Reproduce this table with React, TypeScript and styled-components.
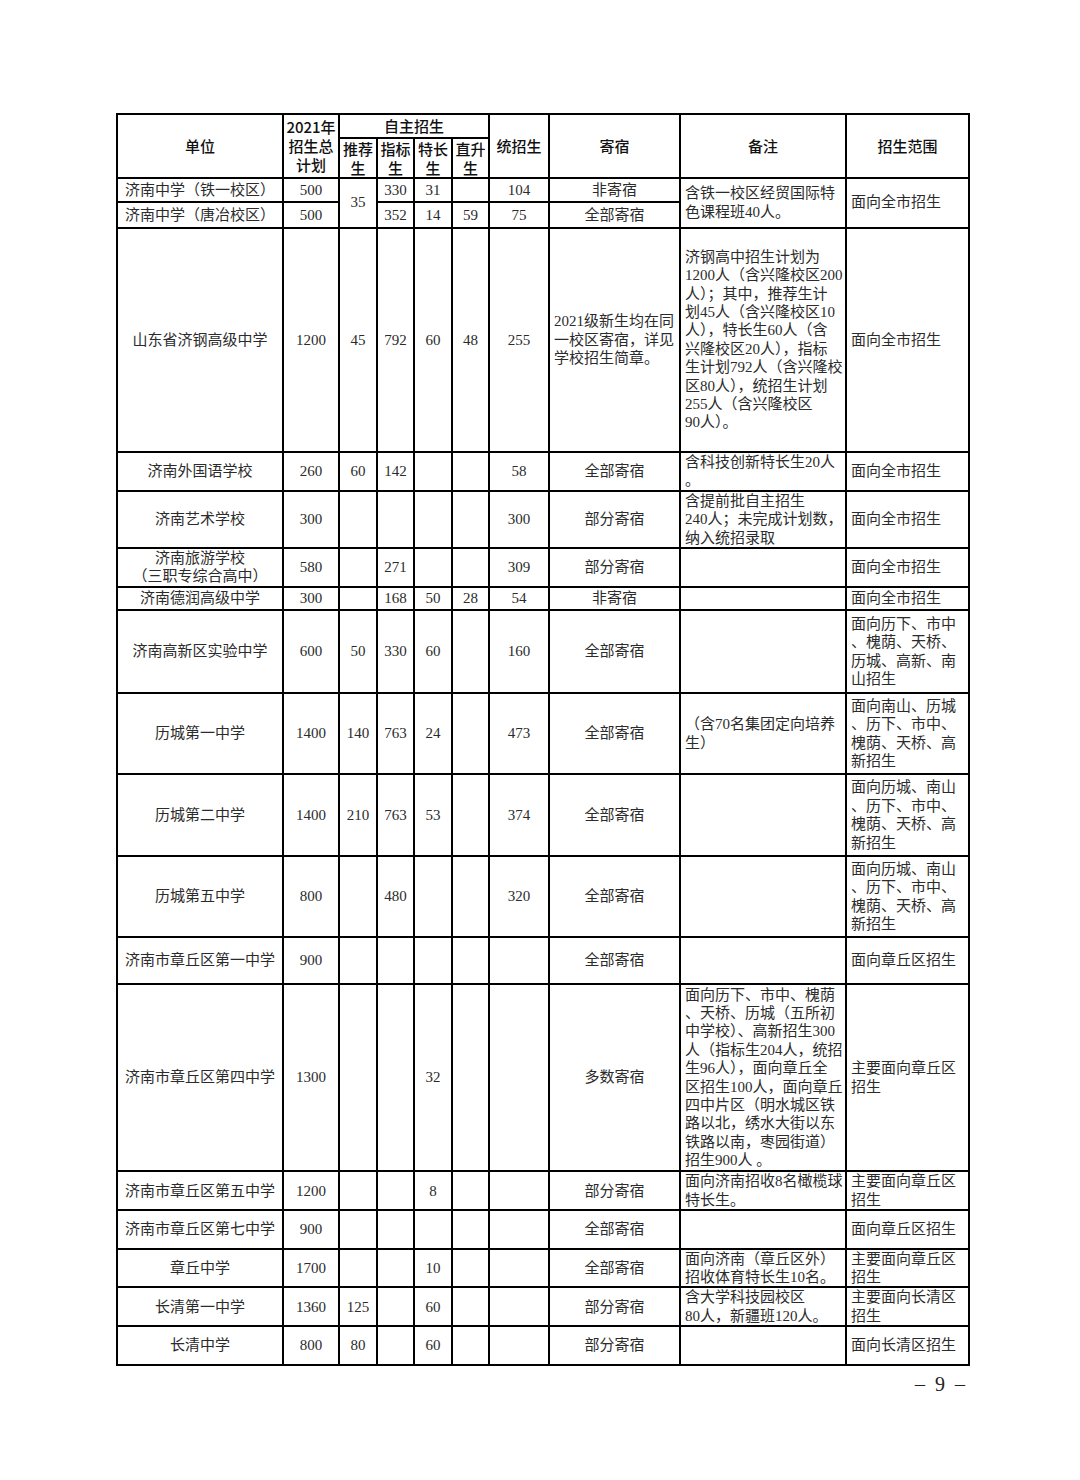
import React from 'react';
import styled, { createGlobalStyle } from 'styled-components';

const GlobalStyle = createGlobalStyle`
  body {
    margin: 0;
    background: #fff;
  }
`;

const Page = styled.div`
  width: 1080px;
  min-height: 1480px;
  box-sizing: border-box;
  padding: 113px 0 0 116px;
  background: #fff;
`;

const Table = styled.table`
  width: 852px;
  table-layout: fixed;
  border-collapse: collapse;
  border: 2px solid #000;
  font-family: "Liberation Serif", "Noto Sans CJK SC", serif;
  font-size: 15px;
  line-height: 18.4px;
  color: #2b2b2b;
`;

// row heights are measured between rule lines in the scan
const Row = styled.tr<{ $h: number }>`
  height: ${(p) => p.$h - 0.5}px;
`;

const Head = styled.th`
  border: 2px solid #000;
  padding: 0;
  font-family: "Noto Sans CJK SC", sans-serif;
  font-weight: 500;
  font-size: 15px;
  line-height: 19px;
  color: #111;
  text-align: center;
  vertical-align: middle;
`;

const Cell = styled.td<{ $left?: boolean }>`
  border: 2px solid #000;
  padding: 0 2px 0 ${(p) => (p.$left ? 4 : 2)}px;
  text-align: ${(p) => (p.$left ? 'left' : 'center')};
  vertical-align: middle;
  white-space: nowrap;
  overflow: hidden;
`;

const PageNo = styled.div`
  width: 852px;
  margin-top: 8px;
  padding-right: 3px;
  box-sizing: border-box;
  text-align: right;
  font-family: "Liberation Serif", serif;
  font-size: 20px;
  line-height: 20px;
  word-spacing: 5px;
  color: #222;
`;

const colWidths = [166, 56, 38, 37, 38, 37, 60, 131, 166, 123];

const Lines: React.FC<{ lines: string[] }> = ({ lines }) => (
  <>
    {lines.map((l, i) => (
      <React.Fragment key={i}>
        {i > 0 && <br />}
        {l}
      </React.Fragment>
    ))}
  </>
);

type School = {
  name: string[];
  total: string;
  tj: string;
  zb: string;
  tc: string;
  zs: string;
  tz: string;
  js: string[];
  jsLeft?: boolean;
  bz: string[];
  fw: string[];
  h: number;
};

const FOUR_AREAS_A = ['面向历城、南山', '、历下、市中、', '槐荫、天桥、高', '新招生'];

const schools: School[] = [
  {
    name: ['山东省济钢高级中学'], total: '1200', tj: '45', zb: '792', tc: '60', zs: '48', tz: '255',
    js: ['2021级新生均在同', '一校区寄宿，详见', '学校招生简章。'], jsLeft: true,
    bz: [
      '济钢高中招生计划为',
      '1200人（含兴隆校区200',
      '人）；其中，推荐生计',
      '划45人（含兴隆校区10',
      '人），特长生60人（含',
      '兴隆校区20人），指标',
      '生计划792人（含兴隆校',
      '区80人），统招生计划',
      '255人（含兴隆校区',
      '90人）。',
    ],
    fw: ['面向全市招生'], h: 225,
  },
  {
    name: ['济南外国语学校'], total: '260', tj: '60', zb: '142', tc: '', zs: '', tz: '58',
    js: ['全部寄宿'], bz: ['含科技创新特长生20人', '。'], fw: ['面向全市招生'], h: 37,
  },
  {
    name: ['济南艺术学校'], total: '300', tj: '', zb: '', tc: '', zs: '', tz: '300',
    js: ['部分寄宿'], bz: ['含提前批自主招生', '240人；未完成计划数，', '纳入统招录取'], fw: ['面向全市招生'], h: 56,
  },
  {
    name: ['济南旅游学校', '（三职专综合高中）'], total: '580', tj: '', zb: '271', tc: '', zs: '', tz: '309',
    js: ['部分寄宿'], bz: [], fw: ['面向全市招生'], h: 38,
  },
  {
    name: ['济南德润高级中学'], total: '300', tj: '', zb: '168', tc: '50', zs: '28', tz: '54',
    js: ['非寄宿'], bz: [], fw: ['面向全市招生'], h: 24,
  },
  {
    name: ['济南高新区实验中学'], total: '600', tj: '50', zb: '330', tc: '60', zs: '', tz: '160',
    js: ['全部寄宿'], bz: [], fw: ['面向历下、市中', '、槐荫、天桥、', '历城、高新、南', '山招生'], h: 83,
  },
  {
    name: ['历城第一中学'], total: '1400', tj: '140', zb: '763', tc: '24', zs: '', tz: '473',
    js: ['全部寄宿'], bz: ['（含70名集团定向培养', '生）'],
    fw: ['面向南山、历城', '、历下、市中、', '槐荫、天桥、高', '新招生'], h: 82,
  },
  {
    name: ['历城第二中学'], total: '1400', tj: '210', zb: '763', tc: '53', zs: '', tz: '374',
    js: ['全部寄宿'], bz: [], fw: FOUR_AREAS_A, h: 82,
  },
  {
    name: ['历城第五中学'], total: '800', tj: '', zb: '480', tc: '', zs: '', tz: '320',
    js: ['全部寄宿'], bz: [], fw: FOUR_AREAS_A, h: 82,
  },
  {
    name: ['济南市章丘区第一中学'], total: '900', tj: '', zb: '', tc: '', zs: '', tz: '',
    js: ['全部寄宿'], bz: [], fw: ['面向章丘区招生'], h: 47,
  },
  {
    name: ['济南市章丘区第四中学'], total: '1300', tj: '', zb: '', tc: '32', zs: '', tz: '',
    js: ['多数寄宿'],
    bz: [
      '面向历下、市中、槐荫',
      '、天桥、历城（五所初',
      '中学校）、高新招生300',
      '人（指标生204人，统招',
      '生96人），面向章丘全',
      '区招生100人，面向章丘',
      '四中片区（明水城区铁',
      '路以北，绣水大街以东',
      '铁路以南，枣园街道）',
      '招生900人 。',
    ],
    fw: ['主要面向章丘区', '招生'], h: 188,
  },
  {
    name: ['济南市章丘区第五中学'], total: '1200', tj: '', zb: '', tc: '8', zs: '', tz: '',
    js: ['部分寄宿'], bz: ['面向济南招收8名橄榄球', '特长生。'], fw: ['主要面向章丘区', '招生'], h: 38,
  },
  {
    name: ['济南市章丘区第七中学'], total: '900', tj: '', zb: '', tc: '', zs: '', tz: '',
    js: ['全部寄宿'], bz: [], fw: ['面向章丘区招生'], h: 39,
  },
  {
    name: ['章丘中学'], total: '1700', tj: '', zb: '', tc: '10', zs: '', tz: '',
    js: ['全部寄宿'], bz: ['面向济南（章丘区外）', '招收体育特长生10名。'], fw: ['主要面向章丘区', '招生'], h: 39,
  },
  {
    name: ['长清第一中学'], total: '1360', tj: '125', zb: '', tc: '60', zs: '', tz: '',
    js: ['部分寄宿'], bz: ['含大学科技园校区', '80人，新疆班120人。'], fw: ['主要面向长清区', '招生'], h: 39,
  },
  {
    name: ['长清中学'], total: '800', tj: '80', zb: '', tc: '60', zs: '', tz: '',
    js: ['部分寄宿'], bz: [], fw: ['面向长清区招生'], h: 39,
  },
];

const App: React.FC = () => {
  return (
    <Page>
      <GlobalStyle />
      <Table>
        <colgroup>
          {colWidths.map((w, i) => (
            <col key={i} style={{ width: w }} />
          ))}
        </colgroup>
        <thead>
          <Row $h={24}>
            <Head rowSpan={2}>单位</Head>
            <Head rowSpan={2}>
              <Lines lines={['2021年', '招生总', '计划']} />
            </Head>
            <Head colSpan={4}>自主招生</Head>
            <Head rowSpan={2}>统招生</Head>
            <Head rowSpan={2}>寄宿</Head>
            <Head rowSpan={2}>备注</Head>
            <Head rowSpan={2}>招生范围</Head>
          </Row>
          <Row $h={38}>
            <Head><Lines lines={['推荐', '生']} /></Head>
            <Head><Lines lines={['指标', '生']} /></Head>
            <Head><Lines lines={['特长', '生']} /></Head>
            <Head><Lines lines={['直升', '生']} /></Head>
          </Row>
        </thead>
        <tbody>
          <Row $h={25}>
            <Cell>济南中学（铁一校区）</Cell>
            <Cell>500</Cell>
            <Cell rowSpan={2}>35</Cell>
            <Cell>330</Cell>
            <Cell>31</Cell>
            <Cell></Cell>
            <Cell>104</Cell>
            <Cell>非寄宿</Cell>
            <Cell rowSpan={2} $left>
              <Lines lines={['含铁一校区经贸国际特', '色课程班40人。']} />
            </Cell>
            <Cell rowSpan={2} $left>面向全市招生</Cell>
          </Row>
          <Row $h={26}>
            <Cell>济南中学（唐冶校区）</Cell>
            <Cell>500</Cell>
            <Cell>352</Cell>
            <Cell>14</Cell>
            <Cell>59</Cell>
            <Cell>75</Cell>
            <Cell>全部寄宿</Cell>
          </Row>
          {schools.map((s, i) => (
            <Row key={i} $h={s.h}>
              <Cell><Lines lines={s.name} /></Cell>
              <Cell>{s.total}</Cell>
              <Cell>{s.tj}</Cell>
              <Cell>{s.zb}</Cell>
              <Cell>{s.tc}</Cell>
              <Cell>{s.zs}</Cell>
              <Cell>{s.tz}</Cell>
              <Cell $left={s.jsLeft}><Lines lines={s.js} /></Cell>
              <Cell $left><Lines lines={s.bz} /></Cell>
              <Cell $left><Lines lines={s.fw} /></Cell>
            </Row>
          ))}
        </tbody>
      </Table>
      <PageNo>– 9 –</PageNo>
    </Page>
  );
};

export default App;
